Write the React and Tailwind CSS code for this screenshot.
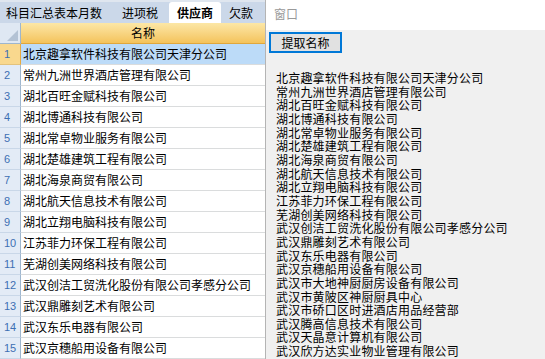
import React from "react";

const names = [
  "北京趣拿软件科技有限公司天津分公司",
  "常州九洲世界酒店管理有限公司",
  "湖北百旺金赋科技有限公司",
  "湖北博通科技有限公司",
  "湖北常卓物业服务有限公司",
  "湖北楚雄建筑工程有限公司",
  "湖北海泉商贸有限公司",
  "湖北航天信息技术有限公司",
  "湖北立翔电脑科技有限公司",
  "江苏菲力环保工程有限公司",
  "芜湖创美网络科技有限公司",
  "武汉创洁工贸洗化股份有限公司孝感分公司",
  "武汉鼎雕刻艺术有限公司",
  "武汉东乐电器有限公司",
  "武汉京穗船用设备有限公司",
  "武汉市大地神厨厨房设备有限公司",
  "武汉市黄陂区神厨厨具中心",
  "武汉市硚口区时进酒店用品经营部",
  "武汉腾高信息技术有限公司",
  "武汉天晶意计算机有限公司",
  "武汉欣方达实业物业管理有限公司",
];

const font = "font-['Noto_Sans_CJK_SC',sans-serif]";

const Sheet = () => {
  return (
    <div className="flex flex-col w-[265px] shrink-0 bg-white overflow-hidden">
      <div className="h-[9px] bg-[#dfe6ef]"></div>
      <div className={`flex h-[21px] items-end bg-[#cbd8e9] text-[12px] text-black ${font}`}>
        <span className="ml-[6px] h-[21px] leading-[21px]">科目汇总表本月数</span>
        <span className="ml-[20px] h-[21px] leading-[21px]">进项税</span>
        <span className="ml-[11px] h-[21px] leading-[21px] px-[8px] bg-white rounded-t-[3px] font-bold">
          供应商
        </span>
        <span className="ml-[8px] h-[21px] leading-[21px]">欠款</span>
      </div>
      <div className="flex h-[21px] shrink-0">
        <div className="relative w-[21px] bg-[#dfe8f3] border-r border-b border-[#9eb6ce]">
          <svg className="absolute right-[2px] bottom-[2px]" width="11" height="11" viewBox="0 0 11 11">
            <polygon points="11,0 11,11 0,11" fill="#b3c2d4" />
          </svg>
        </div>
        <div
          className={`flex-1 flex items-center justify-center text-[12px] text-black border-b border-[#e0a73c] bg-gradient-to-b from-[#fce7a6] to-[#f4c35a] ${font}`}
        >
          名称
        </div>
      </div>
      {names.slice(0, 15).map((name, index) => {
        const selected = index === 0;
        return (
          <div key={index} className="flex h-[21px] shrink-0">
            <div
              className={`w-[21px] pl-[4px] text-[11px] leading-[20px] font-['Liberation_Sans',sans-serif] text-[#3d6fb3] border-b border-r ${
                selected
                  ? "bg-[#f9d88e] border-r-[#e9a93e] border-b-[#e3c27c]"
                  : "bg-[#e3ebf6] border-r-[#9eb6ce] border-b-[#c9d7e8]"
              }`}
            >
              {index + 1}
            </div>
            <div
              className={`flex-1 pl-[2px] text-[12px] leading-[20px] text-black whitespace-nowrap border-b border-[#dadcdd] ${font} ${
                selected ? "bg-[#bcdbf8]" : "bg-white"
              }`}
            >
              {name}
            </div>
          </div>
        );
      })}
    </div>
  );
};

const App = () => {
  return (
    <div className="flex w-[545px] h-[359px] overflow-hidden bg-[#f0f0f0]">
      <Sheet />
      <div className="w-[1px] shrink-0 bg-[#b4b4b4]"></div>
      <div className="flex flex-col flex-1">
        <div className={`h-[30px] shrink-0 bg-white pl-[8px] text-[12px] leading-[28px] text-[#9a9a9a] ${font}`}>
          窗口
        </div>
        <div className="flex-1 bg-[#f0f0f0] flex flex-col">
          <button
            className={`mt-[2px] ml-[3px] w-[73px] h-[21px] border-2 border-[#0078d7] bg-[#e1e1e1] text-[12px] leading-[16px] text-black ${font}`}
          >
            提取名称
          </button>
          <div className={`mt-[18px] pl-[10px] text-[12px] leading-[13.65px] tracking-[0.2px] text-black whitespace-nowrap ${font}`}>
            {names.map((name, index) => (
              <div key={index}>{name}</div>
            ))}
          </div>
        </div>
      </div>
    </div>
  );
};

export default App;
